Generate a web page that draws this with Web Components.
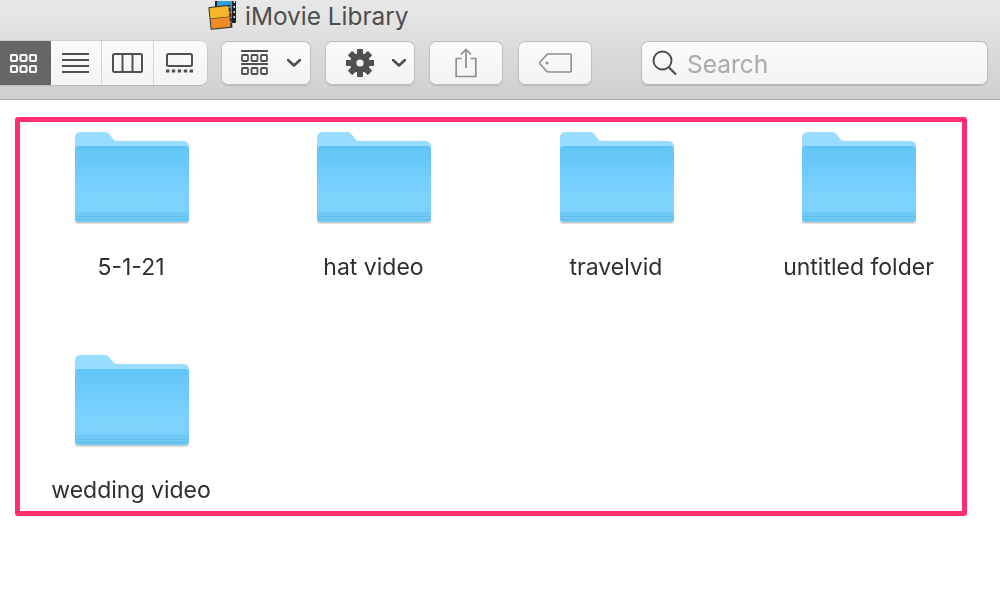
<!DOCTYPE html>
<html><head><meta charset="utf-8"><title>iMovie Library</title>
<style>
html,body{margin:0;padding:0;background:#fff;overflow:hidden}
body{width:1000px;height:604px;font-family:Inter,"Liberation Sans",sans-serif}
</style></head><body>
<finder-window>
  <finder-toolbar title-text="iMovie Library"></finder-toolbar>
  <folder-highlight>
    <folder-item>5-1-21</folder-item>
    <folder-item>hat video</folder-item>
    <folder-item>travelvid</folder-item>
    <folder-item>untitled folder</folder-item>
    <folder-item>wedding video</folder-item>
  </folder-highlight>
</finder-window>
<script>
function def(name, html, init){
  customElements.define(name, class extends HTMLElement{
    constructor(){super();this.attachShadow({mode:'open'}).innerHTML=html;}
    connectedCallback(){ if(init) init(this); }
  });
}
def('finder-window',`<style>:host{display:flex;flex-direction:column;width:1000px;height:604px;overflow:hidden;filter:blur(.45px)}</style><slot></slot>`);

const chev=`<svg width="14" height="8" viewBox="0 0 14 8" style="display:block"><path d="M1 1l6 5.5L13 1" fill="none" stroke="#4f4f4f" stroke-width="2.6" stroke-linecap="round" stroke-linejoin="round"/></svg>`;
const sq=(x,y,w,h,c,sw)=>`<rect x="${x}" y="${y}" width="${w}" height="${h}" rx="1.2" fill="none" stroke="${c}" stroke-width="${sw}"/>`;
const gridIcon=`<svg width="27" height="19" viewBox="0 0 27 19" style="display:block">${[1,10.5,20].flatMap(x=>[1,12].map(y=>sq(x,y,6,6,'#f5f5f5',2.2))).join('')}</svg>`;
const listIcon=`<svg width="27" height="20" viewBox="0 0 27 20" style="display:block"><path d="M0 1h27M0 7h27M0 13h27M0 19h27" stroke="#505050" stroke-width="2"/></svg>`;
const colIcon=`<svg width="31" height="20" viewBox="0 0 31 20" style="display:block"><rect x="1" y="1" width="29" height="18" rx="1.5" fill="none" stroke="#505050" stroke-width="2"/><path d="M10.5 1v18M20.5 1v18" stroke="#505050" stroke-width="2"/></svg>`;
const galIcon=`<svg width="27" height="20" viewBox="0 0 27 20" style="display:block"><rect x="1" y="1" width="25" height="12" rx="1.5" fill="none" stroke="#505050" stroke-width="2"/><path d="M0 18h3.400M5.800 18h3.400M11.800 18h3.400M17.800 18h3.400M23.600 18h3.400" stroke="#505050" stroke-width="3"/></svg>`;
const groupIcon=`<svg width="27" height="26" viewBox="0 0 27 26" style="display:block"><path d="M0 1h27M0 14h27" stroke="#505050" stroke-width="1.8"/>${[1,10.5,20].flatMap(x=>[5,18].map(y=>`<rect x="${x}" y="${y}" width="6" height="6" rx="1" fill="none" stroke="#505050" stroke-width="1.8"/>`)).join('')}</svg>`;
const teeth=[0,45,90,135,180,225,270,315].map(a=>`<rect x="11" y="0" width="6" height="28" rx="1" fill="#505050" transform="rotate(${a} 14 14)"/>`).join('');
const gearIcon=`<svg width="28" height="28" viewBox="0 0 28 28" style="display:block">${teeth}<circle cx="14" cy="14" r="10" fill="#505050"/><circle cx="14" cy="14" r="3.6" fill="#f5f5f5"/></svg>`;
const shareIcon=`<svg width="22" height="30" viewBox="0 0 22 30" style="display:block"><path d="M6.5 10.5H1.2v18h19.6v-18h-5.3M11 20V1.500M6 6.500l5-5 5 5" fill="none" stroke="#8f8f8f" stroke-width="1.7"/></svg>`;
const tagIcon=`<svg width="33" height="20" viewBox="0 0 33 20" style="display:block"><path d="M31 1H10q-1.500 0-2.500 1L1.200 9q-.8 1 0 2l6.300 7q1 1 2.500 1h21q1.200 0 1.200-1.200V2.200Q32.200 1 31 1z" fill="none" stroke="#8f8f8f" stroke-width="1.700"/><circle cx="8" cy="10" r="1.500" fill="#8f8f8f"/></svg>`;
const filmIcon=`<svg width="28" height="30" viewBox="0 0 28 30" style="display:block">
<rect x="7" y="-4" width="21" height="26" fill="#1f1f1f" rx="1"/><rect x="9" y="-3" width="15" height="22" fill="#2a9fdc"/>
<path d="M25.500 1h1.500M25.500 6h1.500M25.500 11h1.500M25.500 16h1.500" stroke="#ddd" stroke-width="2"/>
<g transform="rotate(-6 11 17)"><rect x="1.500" y="5" width="22" height="23" fill="#333" rx="1"/><rect x="2.500" y="6" width="19" height="10.500" fill="#f7b52c"/><rect x="2.500" y="17" width="19" height="10" fill="#f08a24"/><path d="M22.500 7v1M22.500 12v1M22.500 17v1M22.500 22v1" stroke="#bbb" stroke-width="1.500"/></g></svg>`;

def('tool-button',`<style>
:host{display:flex;align-items:center;justify-content:center;box-sizing:border-box;height:44px;
background:linear-gradient(#fbfbfb,#f3f3f3);border-radius:7px;box-shadow:inset 0 0 0 .9px #bcbcbc,0 1px 1px #b8b8b8;flex:none}
</style><slot></slot>`);
def('seg-button',`<style>
:host{display:flex;align-items:center;justify-content:center;height:44px;box-sizing:border-box;flex:none;border-right:1.500px solid #d4d4d4}
:host([active]){background:#666;border-right:0}
:host(:last-child){border-right:0}
</style><slot></slot>`);
def('seg-group',`<style>
:host{display:flex;height:44px;width:207px;overflow:hidden;flex:none;background:linear-gradient(#fbfbfb,#f3f3f3);border-radius:0 7px 7px 0;box-shadow:0 0 0 .5px #bcbcbc,0 1px 1px #b8b8b8}
</style><slot></slot>`);
def('search-field',`<style>
:host{display:flex;align-items:center;box-sizing:border-box;width:347px;height:44px;flex:none;padding-left:11px;gap:9px;
background:linear-gradient(#fbfbfb,#f3f3f3);border-radius:7px;box-shadow:inset 0 0 0 .9px #b8b8b8,0 1px 1px #b8b8b8;
font-size:24.500px;color:#aaa}
svg{display:block;flex:none}
span{padding-top:2px}
</style><svg width="26" height="26" viewBox="0 0 26 26"><circle cx="10.500" cy="10.500" r="9" fill="none" stroke="#4c4c4c" stroke-width="1.900"/><path d="M17 17.500l7 7" stroke="#4c4c4c" stroke-width="2.200"/></svg><span>Search</span>`);

def('finder-toolbar',`<style>
:host{display:flex;flex-direction:column;box-sizing:border-box;height:100px;flex:none;background:linear-gradient(#e8e8e8,#cfcfcf);border-bottom:1.500px solid #a8a8a8}
.title{display:flex;align-items:center;height:41px;box-sizing:border-box;padding:0 0 9px 208px;gap:9px;overflow:hidden;color:#4e4e4e;font-size:24.400px;flex:none}
.row{display:flex;align-items:center;height:44px;padding-right:12px}
.row .g{margin-left:14px}
.chev{display:flex;gap:19px;align-items:center;width:100%;padding-left:20px}
.chev.b{gap:18px;padding-left:21px}
.p2{padding-right:2px}
</style>
<div class="title"><span id="icon"></span><span id="t"></span></div>
<div class="row">
<seg-group>
<seg-button active style="width:51px"><span class="p2" style="padding-right:4px">${gridIcon}</span></seg-button>
<seg-button style="width:51px"><span class="p2">${listIcon}</span></seg-button>
<seg-button style="width:52px">${colIcon}</seg-button>
<seg-button style="width:53px"><span class="p2">${galIcon}</span></seg-button>
</seg-group>
<tool-button class="g" style="width:90px"><span class="chev">${groupIcon}${chev}</span></tool-button>
<tool-button class="g" style="width:90px"><span class="chev b">${gearIcon}${chev}</span></tool-button>
<tool-button class="g" style="width:74px">${shareIcon}</tool-button>
<tool-button class="g" style="width:74px;margin-left:15px">${tagIcon}</tool-button>
<search-field style="margin-left:49px"></search-field>
</div>`, el=>{
  el.shadowRoot.getElementById('t').textContent=el.getAttribute('title-text');
  el.shadowRoot.getElementById('icon').innerHTML=filmIcon;
});

def('folder-highlight',`<style>
:host{display:grid;box-sizing:border-box;width:952px;height:399px;margin:17px 0 0 15px;border:5px solid #ff2e6e;border-radius:3px;
grid-template-columns:repeat(4,200px);column-gap:42.500px;row-gap:65px;padding:0 0 0 11px;align-content:start}
</style><slot></slot>`);
def('folder-item',`<style>
:host{display:flex;flex-direction:column;align-items:center;padding-top:10px;color:#2f2f2f;font-size:23px}
svg{display:block;flex:none;margin-left:1px}
.l{height:26px;line-height:26px;margin-top:30px;white-space:nowrap}
</style>
<svg width="114" height="92" viewBox="0 0 114 92">
<defs>
<linearGradient id="f" x1="0" y1="0" x2="0" y2="1"><stop offset="0" stop-color="#60c5f6"/><stop offset=".65" stop-color="#7cd3fe"/><stop offset="1" stop-color="#7ad1fc"/></linearGradient>
<filter id="s" x="-5%" y="-5%" width="110%" height="115%"><feDropShadow dx="0" dy="1.500" stdDeviation="1" flood-color="#000" flood-opacity=".25"/></filter>
</defs>
<g filter="url(#s)">
<path d="M0 6Q0 0 6 0H30Q33 0 35 3L38 7Q39.500 9 42 9H108Q114 9 114 15V86Q114 90 110 90H4Q0 90 0 86Z" fill="#98dcff"/>
<path d="M0 18Q0 14 4 14H110Q114 14 114 18V86Q114 90 110 90H4Q0 90 0 86Z" fill="url(#f)"/>
<path d="M0 80H114V86Q114 90 110 90H4Q0 90 0 86Z" fill="#6ec9f4"/>
<path d="M0 84.500H114" stroke="#62bfeb" stroke-width="1.200"/>
<path d="M0 87.500H114" stroke="#5fbdea" stroke-width="1.200"/>
</g></svg>
<div class="l"><slot></slot></div>`);
</script>
</body></html>
